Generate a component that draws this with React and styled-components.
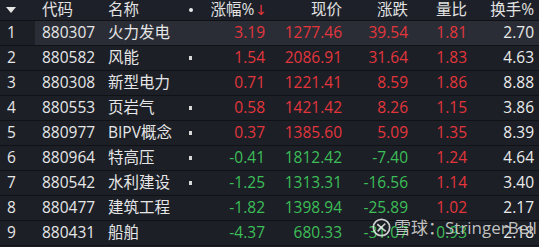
import React from "react";
import styled, { createGlobalStyle } from "styled-components";

const Global = createGlobalStyle`
  html, body { margin: 0; padding: 0; background: #1c1f26; }
  body { width: 539px; height: 247px; overflow: hidden; }
`;

const COLS = "35px 68px 97px 68px 77px 66px 59px 69px";

const Table = styled.div`
  position: relative;
  width: 539px;
  height: 247px;
  background: #1c1f26;
  font-family: "Open Sans", "Noto Sans CJK SC", sans-serif;
  font-size: 15.5px;
  color: #e6e6e6;
  overflow: hidden;
`;

const HeaderRow = styled.div`
  display: grid;
  grid-template-columns: ${COLS};
  height: 20px;
  border-bottom: 1px solid #0f1115;
  background: #1d2028;
  color: #e2e2e2;
  align-items: center;
`;

const Row = styled.div`
  display: grid;
  grid-template-columns: ${COLS};
  height: 24px;
  border-bottom: 1px solid #101216;
  align-items: stretch;
  background: ${(p) => (p.$active ? "#2a2d36" : "#1c1f26")};
`;

const Cell = styled.div`
  display: flex;
  align-items: center;
  justify-content: ${(p) => (p.$right ? "flex-end" : "flex-start")};
  padding-left: ${(p) => p.$pl || 0}px;
  padding-right: ${(p) => p.$pr || 0}px;
  color: ${(p) => p.$color || "inherit"};
  background: ${(p) => p.$bg || "transparent"};
  white-space: nowrap;
  line-height: 1;
`;

const NameCell = styled(Cell)`
  justify-content: space-between;
  padding-right: 8px;
`;

const Square = styled.span`
  width: 3px;
  height: 4px;
  background: #d8d8d8;
`;

const Dot = styled.span`
  width: 4px;
  height: 4px;
  border-radius: 50%;
  background: #e8e8e8;
  margin-right: -1px;
`;

const Arrow = styled.span`
  color: #e8353b;
  font-size: 14px;
  margin-left: 1px;
  font-family: "DejaVu Sans", sans-serif;
`;

const Watermark = styled.div`
  position: absolute;
  left: 372px;
  top: 218px;
  display: flex;
  align-items: center;
  gap: 3px;
  color: rgba(235, 235, 235, 0.82);
  font-family: "Open Sans", "Noto Sans CJK SC", sans-serif;
  font-size: 17px;
  line-height: 1;
  text-shadow: 0 0 1px rgba(0, 0, 0, 0.6);
`;

const RED = "#e2363c";
const GREEN = "#3cbe58";
const WHITE = "#ebebeb";

const rows = [
  ["1", "880307", "火力发电", false, "3.19", "1277.46", "39.54", "1.81", "2.70"],
  ["2", "880582", "风能", true, "1.54", "2086.91", "31.64", "1.83", "4.63"],
  ["3", "880308", "新型电力", false, "0.71", "1221.41", "8.59", "1.86", "8.88"],
  ["4", "880553", "页岩气", true, "0.58", "1421.42", "8.26", "1.15", "3.86"],
  ["5", "880977", "BIPV概念", true, "0.37", "1385.60", "5.09", "1.35", "8.39"],
  ["6", "880964", "特高压", true, "-0.41", "1812.42", "-7.40", "1.24", "4.64"],
  ["7", "880542", "水利建设", true, "-1.25", "1313.31", "-16.56", "1.14", "3.40"],
  ["8", "880477", "建筑工程", false, "-1.82", "1398.94", "-25.89", "1.02", "2.17"],
  ["9", "880431", "船舶", false, "-4.37", "680.33", "-31.07", "0.93", "2.18"],
];

function Triangle() {
  return (
    <svg width="10" height="6" viewBox="0 0 10 6">
      <path d="M0 0 L10 0 L5 6 Z" fill="#e6e6e6" />
    </svg>
  );
}

function Logo() {
  return (
    <svg width="19" height="19" viewBox="0 0 20 20">
      <circle cx="10" cy="10" r="8.6" fill="none" stroke="rgba(235,235,235,0.85)" strokeWidth="1.8" />
      <path d="M5.5 6.5 C8 8, 10 11, 14.5 14" fill="none" stroke="rgba(235,235,235,0.85)" strokeWidth="1.8" />
      <path d="M14 6 C11 8.5, 9.5 10.5, 6 14" fill="none" stroke="rgba(235,235,235,0.85)" strokeWidth="1.8" />
    </svg>
  );
}

export default function App() {
  return (
    <Table>
      <Global />
      <HeaderRow>
        <Cell $pl={6}><Triangle /></Cell>
        <Cell $pl={7}>代码</Cell>
        <NameCell $pl={5}>名称<Dot /></NameCell>
        <Cell $right $pr={1}>涨幅%<Arrow>↓</Arrow></Cell>
        <Cell $right $pr={3}>现价</Cell>
        <Cell $right $pr={3}>涨跌</Cell>
        <Cell $right $pr={3}>量比</Cell>
        <Cell $right $pr={5}>换手%</Cell>
      </HeaderRow>
      {rows.map((r, i) => {
        const up = !r[4].startsWith("-");
        const c = up ? RED : GREEN;
        const ratioC = parseFloat(r[7]) >= 1 ? RED : GREEN;
        return (
          <Row key={r[1]} $active={i === 0}>
            <Cell $pl={7} $bg={i === 0 ? "#1c1f26" : undefined}>{r[0]}</Cell>
            <Cell $pl={7}>{r[1]}</Cell>
            <NameCell $pl={5}>
              <span>{r[2]}</span>
              {r[3] ? <Square /> : null}
            </NameCell>
            <Cell $right $pr={3} $color={c}>{r[4]}</Cell>
            <Cell $right $pr={3} $color={c}>{r[5]}</Cell>
            <Cell $right $pr={3} $color={c}>{r[6]}</Cell>
            <Cell $right $pr={3} $color={ratioC}>{r[7]}</Cell>
            <Cell $right $pr={5} $color={WHITE}>{r[8]}</Cell>
          </Row>
        );
      })}
      <Watermark>
        <Logo />
        <span>雪球：StringerBell</span>
      </Watermark>
    </Table>
  );
}
